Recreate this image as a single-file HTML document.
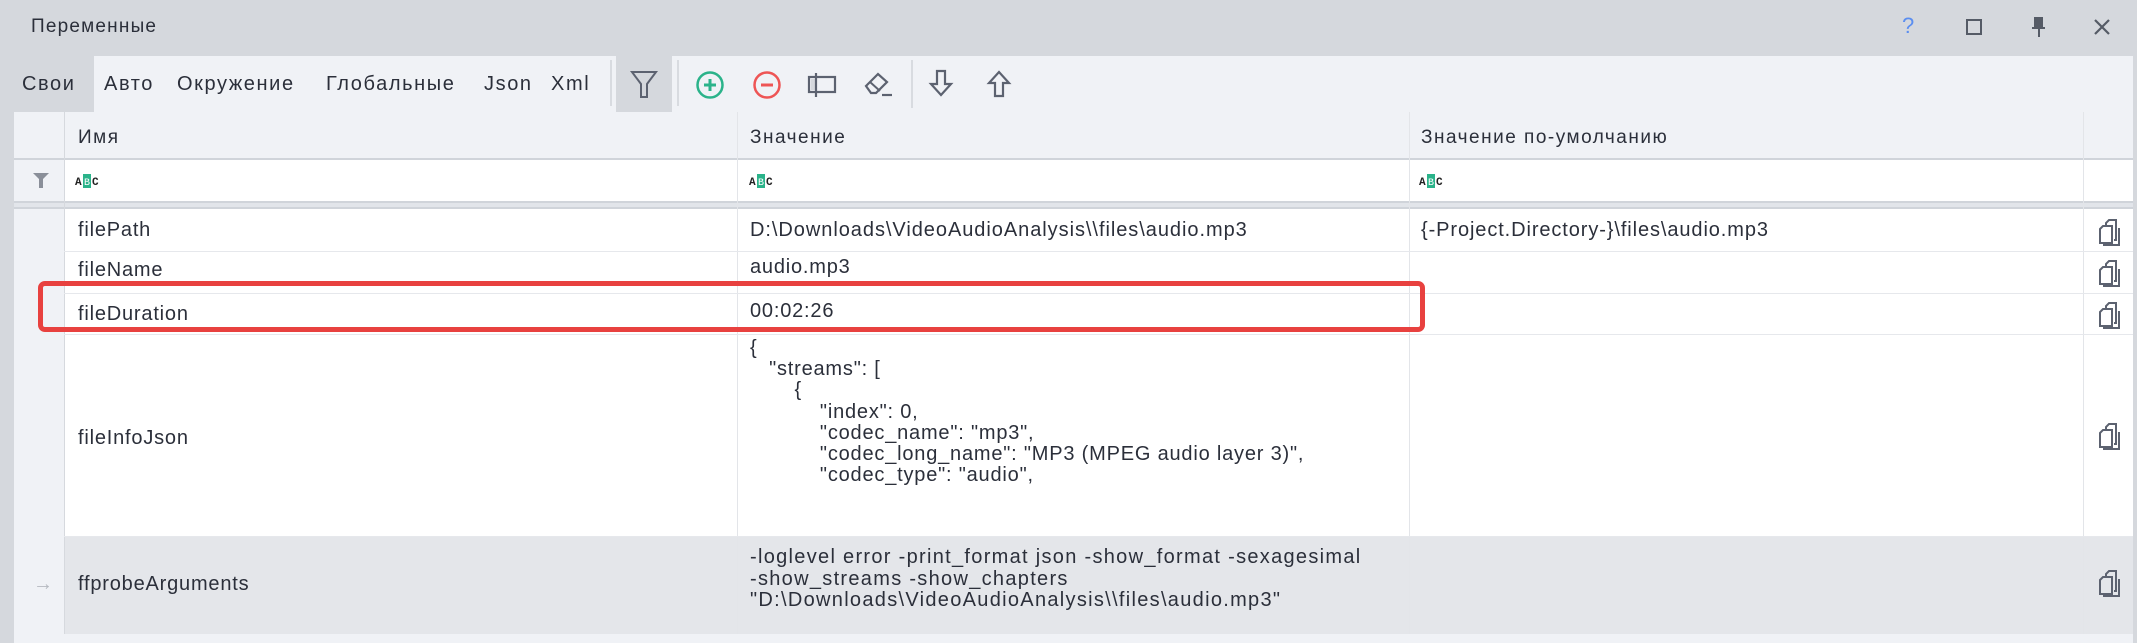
<!DOCTYPE html>
<html><head><meta charset="utf-8"><style>
*{margin:0;padding:0;box-sizing:border-box}
body{width:2137px;height:643px;background:#d5d8dd;position:relative;overflow:hidden;font-family:"Liberation Sans","DejaVu Sans",sans-serif;color:#2b2f3a}
.a{position:absolute}
.t{position:absolute;font-size:20px;letter-spacing:0.8px;white-space:pre;line-height:24px}
.tab{position:absolute;font-size:20px;letter-spacing:1.6px;white-space:pre;line-height:24px;top:72px}
.hd{position:absolute;font-size:19px;letter-spacing:1.5px;white-space:pre;line-height:24px;top:126px}
.hl{position:absolute;height:1px;background:#e6e8ec}
.vl{position:absolute;width:1px;background:#e3e5e9}
</style></head><body>
<!-- title -->
<div class="t" style="left:31px;top:15px;font-size:19px;letter-spacing:1.2px">Переменные</div>
<div class="t" style="left:1902px;top:14px;color:#5b8ef0;font-size:22px">?</div>
<div class="a" style="left:1966px;top:19px;width:16px;height:16px;border:2px solid #555b66"></div>
<svg class="a" style="left:2030px;top:17px" width="18" height="22"><rect x="4" y="0" width="9" height="10" fill="#555b66"/><rect x="2" y="10" width="13" height="2" fill="#555b66"/><rect x="8" y="12" width="2" height="8" fill="#555b66"/></svg>
<svg class="a" style="left:2093px;top:18px" width="18" height="18"><path d="M2 2L16 16M16 2L2 16" stroke="#555b66" stroke-width="2.2"/></svg>
<!-- toolbar -->
<div class="a" style="left:14px;top:56px;width:2119px;height:56px;background:#f0f2f6"></div>
<div class="a" style="left:14px;top:56px;width:80px;height:56px;background:#d5d8dd"></div>
<div class="tab" style="left:22px">Свои</div>
<div class="tab" style="left:104px">Авто</div>
<div class="tab" style="left:177px">Окружение</div>
<div class="tab" style="left:326px">Глобальные</div>
<div class="tab" style="left:484px">Json</div>
<div class="tab" style="left:551px">Xml</div>
<div class="a" style="left:610px;top:60px;width:2px;height:46px;background:#d8dbe0"></div>
<div class="a" style="left:616px;top:56px;width:56px;height:56px;background:#d5d8dd"></div>
<svg class="a" style="left:630px;top:70px" width="28" height="30"><path d="M2 2H26L17 14V27H11V14Z" fill="none" stroke="#5c6270" stroke-width="2"/></svg>
<div class="a" style="left:677px;top:60px;width:2px;height:46px;background:#d8dbe0"></div>
<svg class="a" style="left:695px;top:70px" width="30" height="30"><circle cx="15" cy="15" r="12.5" fill="none" stroke="#2bb38a" stroke-width="2.5"/><path d="M15 9V21M9 15H21" stroke="#2bb38a" stroke-width="3"/></svg>
<svg class="a" style="left:752px;top:70px" width="30" height="30"><circle cx="15" cy="15" r="12.5" fill="none" stroke="#ee5555" stroke-width="2.5"/><path d="M9 15H21" stroke="#ee5555" stroke-width="3"/></svg>
<svg class="a" style="left:806px;top:70px" width="32" height="30"><rect x="3" y="7" width="26" height="15" fill="none" stroke="#5c6270" stroke-width="2.2"/><rect x="5" y="9" width="5" height="11" fill="#d5d8dd"/><path d="M10 3V27" stroke="#5c6270" stroke-width="2.2"/></svg>
<svg class="a" style="left:862px;top:68px" width="34" height="32"><path d="M4 18L16 6L25 14L14 25H9Z" fill="none" stroke="#5c6270" stroke-width="2.2"/><path d="M8 14L18 23" stroke="#5c6270" stroke-width="2"/><path d="M20 27H30" stroke="#5c6270" stroke-width="2.2"/></svg>
<div class="a" style="left:911px;top:60px;width:2px;height:48px;background:#d8dbe0"></div>
<svg class="a" style="left:928px;top:68px" width="26" height="32"><path d="M9 3H17V16H23L13 27L3 16H9Z" fill="none" stroke="#5c6270" stroke-width="2.2"/></svg>
<svg class="a" style="left:986px;top:68px" width="26" height="32"><path d="M9 28H17V15H23L13 4L3 15H9Z" fill="none" stroke="#5c6270" stroke-width="2.2"/></svg>
<!-- grid -->
<div class="a" style="left:14px;top:112px;width:2119px;height:48px;background:#f0f2f6"></div>
<div class="a" style="left:14px;top:160px;width:2119px;height:474px;background:#fff"></div>
<div class="a" style="left:14px;top:634px;width:2119px;height:9px;background:#f0f2f6"></div>
<div class="a" style="left:14px;top:160px;width:50px;height:474px;background:#f0f2f6"></div>
<div class="a" style="left:14px;top:201px;width:2119px;height:8px;background:#e2e5ea;border-top:2px solid #d0d4da;border-bottom:2px solid #d0d4da"></div>
<div class="a" style="left:14px;top:158px;width:2119px;height:2px;background:#d0d4da"></div>
<div class="a" style="left:64px;top:536px;width:2069px;height:98px;background:#e4e6ea"></div>
<div class="vl" style="left:64px;top:112px;height:522px;background:#d6d9de"></div>
<div class="vl" style="left:737px;top:112px;height:522px"></div>
<div class="vl" style="left:1409px;top:112px;height:522px"></div>
<div class="vl" style="left:2083px;top:112px;height:522px"></div>
<div class="hl" style="left:64px;top:251px;width:2069px"></div>
<div class="hl" style="left:64px;top:293px;width:2069px"></div>
<div class="hl" style="left:64px;top:334px;width:2069px"></div>
<div class="hl" style="left:64px;top:536px;width:2069px"></div>
<!-- header -->
<div class="hd" style="left:78px">Имя</div>
<div class="hd" style="left:750px">Значение</div>
<div class="hd" style="left:1421px">Значение по-умолчанию</div>
<svg class="a" style="left:32px;top:172px" width="18" height="18"><path d="M1 1H17L11 7V16H7V7Z" fill="#8a8f99"/></svg>
<svg class="a" style="left:75px;top:174px" width="32" height="14"><text x="0" y="11" font-size="11" font-family="Liberation Mono" font-weight="bold" fill="#222">A</text><rect x="8" y="0" width="8" height="14" fill="#2bb38a"/><text x="9" y="11" font-size="10" font-family="Liberation Mono" fill="#fff">B</text><text x="17" y="11" font-size="11" font-family="Liberation Mono" font-weight="bold" fill="#222">C</text></svg>
<svg class="a" style="left:749px;top:174px" width="32" height="14"><text x="0" y="11" font-size="11" font-family="Liberation Mono" font-weight="bold" fill="#222">A</text><rect x="8" y="0" width="8" height="14" fill="#2bb38a"/><text x="9" y="11" font-size="10" font-family="Liberation Mono" fill="#fff">B</text><text x="17" y="11" font-size="11" font-family="Liberation Mono" font-weight="bold" fill="#222">C</text></svg>
<svg class="a" style="left:1419px;top:174px" width="32" height="14"><text x="0" y="11" font-size="11" font-family="Liberation Mono" font-weight="bold" fill="#222">A</text><rect x="8" y="0" width="8" height="14" fill="#2bb38a"/><text x="9" y="11" font-size="10" font-family="Liberation Mono" fill="#fff">B</text><text x="17" y="11" font-size="11" font-family="Liberation Mono" font-weight="bold" fill="#222">C</text></svg>
<!-- rows -->
<div class="t" style="left:78px;top:218px">filePath</div>
<div class="t" style="left:750px;top:218px;letter-spacing:0.95px">D:\Downloads\VideoAudioAnalysis\\files\audio.mp3</div>
<div class="t" style="left:1421px;top:218px;letter-spacing:0.9px">{-Project.Directory-}\files\audio.mp3</div>
<div class="t" style="left:78px;top:258px">fileName</div>
<div class="t" style="left:750px;top:255px">audio.mp3</div>
<div class="t" style="left:78px;top:302px">fileDuration</div>
<div class="t" style="left:750px;top:299px">00:02:26</div>
<div class="t" style="left:78px;top:426px">fileInfoJson</div>
<div class="t" style="left:750px;top:338px;line-height:21.2px">{
   "streams": [
       {
           "index": 0,
           "codec_name": "mp3",
           "codec_long_name": "MP3 (MPEG audio layer 3)",
           "codec_type": "audio",</div>
<div class="t" style="left:33px;top:572px;color:#b5b9c0">→</div>
<div class="t" style="left:78px;top:572px">ffprobeArguments</div>
<div class="t" style="left:750px;top:547px;line-height:21.5px;letter-spacing:1.3px">-loglevel error -print_format json -show_format -sexagesimal
-show_streams -show_chapters
"D:\Downloads\VideoAudioAnalysis\\files\audio.mp3"</div>
<!-- copy icons -->
<svg class="a" style="left:2097px;top:218px" width="28" height="30"><path d="M9 8V5L12 2H19V22H17" fill="none" stroke="#5c6270" stroke-width="2"/><path d="M3 11L6 8H15V25H3Z" fill="#fff" stroke="#5c6270" stroke-width="2"/><path d="M6 27H22V10" fill="none" stroke="#5c6270" stroke-width="2"/></svg>
<svg class="a" style="left:2097px;top:259px" width="28" height="30"><path d="M9 8V5L12 2H19V22H17" fill="none" stroke="#5c6270" stroke-width="2"/><path d="M3 11L6 8H15V25H3Z" fill="#fff" stroke="#5c6270" stroke-width="2"/><path d="M6 27H22V10" fill="none" stroke="#5c6270" stroke-width="2"/></svg>
<svg class="a" style="left:2097px;top:301px" width="28" height="30"><path d="M9 8V5L12 2H19V22H17" fill="none" stroke="#5c6270" stroke-width="2"/><path d="M3 11L6 8H15V25H3Z" fill="#fff" stroke="#5c6270" stroke-width="2"/><path d="M6 27H22V10" fill="none" stroke="#5c6270" stroke-width="2"/></svg>
<svg class="a" style="left:2097px;top:422px" width="28" height="30"><path d="M9 8V5L12 2H19V22H17" fill="none" stroke="#5c6270" stroke-width="2"/><path d="M3 11L6 8H15V25H3Z" fill="#fff" stroke="#5c6270" stroke-width="2"/><path d="M6 27H22V10" fill="none" stroke="#5c6270" stroke-width="2"/></svg>
<svg class="a" style="left:2097px;top:569px" width="28" height="30"><path d="M9 8V5L12 2H19V22H17" fill="none" stroke="#5c6270" stroke-width="2"/><path d="M3 11L6 8H15V25H3Z" fill="#e4e6ea" stroke="#5c6270" stroke-width="2"/><path d="M6 27H22V10" fill="none" stroke="#5c6270" stroke-width="2"/></svg>
<!-- red highlight -->
<div class="a" style="left:38px;top:281px;width:1387px;height:51px;border:5px solid #e8413f;border-radius:7px"></div>
</body></html>
